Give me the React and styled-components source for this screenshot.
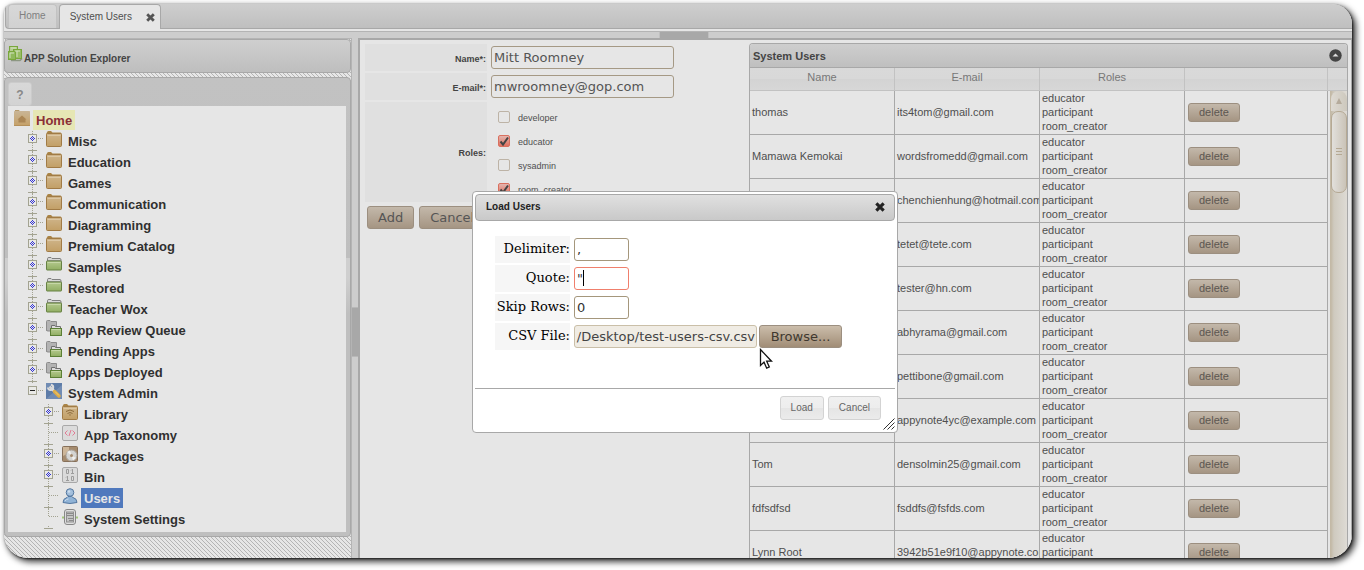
import React from "react";
import styled, { createGlobalStyle, css } from "styled-components";

const line = "#a8a8a8";
const sans = '"Liberation Sans", Arial, sans-serif';
const dejavu = '"DejaVu Sans", Verdana, sans-serif';

const GlobalStyle = createGlobalStyle`
  *, *::before, *::after { box-sizing: border-box; }
  html, body { margin: 0; background: #fff; }
  body { font: 11px/14px ${sans}; color: #4f4f4f; overflow: hidden; }
  button, input { font: inherit; color: inherit; margin: 0; }
  a { color: inherit; text-decoration: none; }
`;

const hatch = css`
  background-color: #e6e6e6;
  background-image: linear-gradient(45deg, #b4b4b4 12.5%, transparent 12.5%, transparent 50%, #b4b4b4 50%, #b4b4b4 62.5%, transparent 62.5%);
  background-size: 4px 4px;
`;

const Shell = styled.div`
  padding: 4px 12px 12px 4px;
  height: 100vh;
`;

const Frame = styled.div`
  display: flex;
  flex-direction: column;
  height: 100%;
  overflow: hidden;
  background: #e6e6e6;
  border-radius: 8px 20px 24px 24px;
  box-shadow: 1px 1px 2px #222, 3px 3px 6px 1px rgba(0, 0, 0, 0.75);
`;

/* ---------- tabs ---------- */
const TabBar = styled.nav`
  display: flex;
  align-items: flex-end;
  gap: 2px;
  flex: none;
  height: 25px;
  margin-left: 1px;
  padding-left: 2px;
  background: linear-gradient(#cecece, #bfbfbf);
  border: solid ${line};
  border-width: 0 0 1px 1px;
  border-radius: 0 0 0 4px;
`;

const Tab = styled.div`
  display: flex;
  align-items: center;
  gap: 14px;
  height: ${(p) => (p.$active ? 25 : 24)}px;
  margin-bottom: ${(p) => (p.$active ? -1 : 0)}px;
  padding: 0 ${(p) => (p.$active ? 5 : 10)}px 1px 10px;
  font-size: 10px;
  color: ${(p) => (p.$active ? "#4f4f4f" : "#808080")};
  background: ${(p) => (p.$active ? "#e6e6e6" : "linear-gradient(#d8d8d8, #d1d1d1)")};
  border: 1px solid ${(p) => (p.$active ? line : "#c2c2c2")};
  border-bottom: 0;
  border-radius: 4px 4px 0 0;
`;

const IconButton = styled.button`
  display: flex;
  padding: 0;
  border: 0;
  background: none;
`;

const TabClose = styled(IconButton)`
  padding-top: 2px;
`;

const TopStrip = styled.div`
  flex: none;
  height: 3px;
  background: #e6e6e6;
  border-bottom: 1px solid #b4b4b4;
`;

const SplitterH = styled.div`
  display: flex;
  justify-content: center;
  flex: none;
  height: 6px;
  padding-left: 12px;
  background: #cdcdcd;
  &::after { content: ""; width: 50px; background: #a8a8a8; border: solid #c0c0c0; border-width: 0 1px; }
`;

/* ---------- panes ---------- */
const Body = styled.div`
  display: flex;
  flex: 1;
  min-height: 0;
`;

const West = styled.aside`
  display: flex;
  flex-direction: column;
  flex: 0 0 348px;
  gap: 4px;
  border: solid #b4b4b4;
  border-width: 1px 1px 0 0;
  ${hatch}
`;

const SplitterV = styled.div`
  display: flex;
  align-items: center;
  flex: 0 0 6px;
  padding-top: 68px;
  background: #cdcdcd;
  &::after { content: ""; width: 6px; height: 50px; background: #a8a8a8; border: solid #b8b8b8; border-width: 1px 0; }
`;

const Center = styled.main`
  display: flex;
  flex: 1;
  gap: 5px;
  min-width: 0;
  padding: 3px 3px 0 5px;
  background: #e6e6e6;
  border: solid ${line};
  border-width: 2px 1px 0 2px;
`;

const ExplorerHeader = styled.h1`
  display: flex;
  align-items: center;
  flex: none;
  height: 34px;
  margin: 0;
  padding: 5px 3px 0;
  font-size: 10px;
  font-weight: bold;
  color: #444;
  background: linear-gradient(#cfcfcf, #bebebe);
  border: 1px solid ${line};
  border-radius: 4px;
  svg { margin-top: -10px; }
`;

const TreePanel = styled.section`
  padding: 4px 4px 4px 3px;
  background: linear-gradient(#c2c2c2 0, #bfbfbf 180px, #cfcfcf 180px, #cfcfcf 200px, #bfbfbf 236px, #bfbfbf);
  border: 1px solid ${line};
  border-radius: 4px;
`;

const HelpButton = styled.button`
  display: block;
  width: 24px;
  height: 24px;
  padding: 1px 0 0;
  font-size: 12px;
  font-weight: bold;
  color: #888;
  background: linear-gradient(#d8d8d8, #d3d3d3);
  border: 1px solid #cbcbcb;
  border-radius: 3px;
`;

const Tree = styled.ul`
  margin: 0;
  padding: 4px 6px 2px;
  list-style: none;
  background: #e6e6e6;
`;

const TreeRow = styled.li`
  display: flex;
  height: 21px;
  padding-left: ${(p) => (p.$level ? p.$level * 16 - 2 : 0)}px;
  svg { flex: none; }
`;

const TreeLink = styled.a`
  height: 20px;
  margin-left: 3px;
  padding: 0 3px;
  font-size: 13px;
  line-height: 21px;
  font-weight: bold;
  color: #303030;
  ${(p) => p.$root && "color: #8b2f36; background: #e6e6b4;"}
  ${(p) => p.$active && "color: #e6e6e6; background: #5079bd;"}
`;

/* ---------- form ---------- */
const FormPane = styled.form`
  flex: 0 0 379px;
  padding-top: 1px;
`;

const FieldGrid = styled.div`
  display: grid;
  grid-template-columns: 122px 1fr;
  gap: 2px 4px;
`;

const FieldLabel = styled.label`
  display: flex;
  align-items: center;
  justify-content: flex-end;
  min-height: 27px;
  padding: 2px 1px 0 0;
  font-size: 9px;
  font-weight: bold;
  color: #444;
  background: #e0e0e0;
`;

const TextInput = styled.input`
  align-self: center;
  width: ${(p) => p.$w}px;
  height: 23px;
  padding: 0 2px;
  font: 13px/18px ${dejavu};
  color: #555;
  background: transparent;
  border: 1px solid #a59985;
  border-radius: 3px;
  outline: 0;
`;

const RoleList = styled.div`
  display: flex;
  flex-direction: column;
  height: 100px;
  padding: 3px 0 0 7px;
`;

const RoleLabel = styled.label`
  display: flex;
  align-items: center;
  gap: 8px;
  flex: none;
  height: 24px;
  padding-top: 2px;
  font-size: 9px;
`;

const CheckWrap = styled.span`
  position: relative;
  display: flex;
  margin-top: -2px;
  svg { position: absolute; left: 0; top: 0; pointer-events: none; }
`;

const Check = styled.input`
  appearance: none;
  width: 12px;
  height: 12px;
  border: 1px solid #bdb3a6;
  border-radius: 2px;
  &:checked { border-color: #d9705f; background: linear-gradient(#e3b5ae, #e0705f); }
`;

const Buttons = styled.div`
  display: flex;
  gap: 5px;
  padding: 4px 2px;
`;

const taupe = css`
  background: linear-gradient(#c3b8aa, #a59583);
  border: 1px solid #9c8f80;
  border-radius: 3px;
`;

const BigButton = styled.button`
  height: 23px;
  padding: 0 10px;
  font: 13px/18px ${dejavu};
  color: #555;
  ${taupe}
`;

/* ---------- grid ---------- */
const GridPanel = styled.section`
  display: flex;
  flex-direction: column;
  flex: 1;
  min-width: 0;
  border: 1px solid ${line};
  border-bottom: 0;
  border-radius: 4px 4px 0 0;
`;

const GridTitle = styled.h2`
  display: flex;
  align-items: center;
  justify-content: space-between;
  flex: none;
  height: 24px;
  margin: 0;
  padding: 0 5px 0 3px;
  font-size: 11px;
  color: #444;
  background: linear-gradient(#cecece, #bfbfbf);
  border-bottom: 1px solid ${line};
  border-radius: 3px 3px 0 0;
`;

const GridBody = styled.div`
  display: flex;
  background: linear-gradient(#d9d9d9 0, #d8d8d8 11px, #d3d3d3 11px, #d7d7d7 22px, #c2c2c2 22px, #c2c2c2 23px, transparent 23px);
`;

const Table = styled.table`
  flex: 1;
  min-width: 0;
  width: 100%;
  table-layout: fixed;
  border-collapse: separate;
  border-spacing: 0;
`;

const Th = styled.th`
  width: 145px;
  height: 23px;
  padding: 0 0 4px;
  font-weight: normal;
  color: #777;
  border-right: 1px solid #c2c2c2;
  border-bottom: 1px solid #c2c2c2;
  &:last-child { width: auto; }
`;

const Td = styled.td`
  height: 44px;
  padding: 0 2px 1px;
  overflow: hidden;
  white-space: nowrap;
  border-right: 1px solid ${line};
  border-bottom: 1px solid ${line};
`;

const Role = styled.div`
  height: 14px;
`;

const DeleteButton = styled.button`
  display: block;
  height: 19px;
  margin-left: 1px;
  padding: 0 10px;
  line-height: 15px;
  color: #5c5650;
  ${taupe}
`;

const Scroll = styled.div`
  display: flex;
  flex-direction: column;
  flex: 0 0 17px;
  margin: 23px 0 0 2px;
  background: linear-gradient(90deg, #c3b9a6, #cfcabf 3px, #dedbd5);
  border-left: 1px solid #c3b9a6;
`;

const ScrollUp = styled(IconButton)`
  align-items: center;
  justify-content: center;
  height: 20px;
  background: linear-gradient(90deg, #dedad3, #cdc8bd);
  border-radius: 8px 8px 0 0;
`;

const Thumb = styled.div`
  display: flex;
  align-items: center;
  justify-content: center;
  height: 82px;
  background: linear-gradient(90deg, #e2e0dc, #cac3b7);
  border: 1px solid #b5a994;
  border-radius: 7px;
`;

/* ---------- dialog ---------- */
const Dialog = styled.section`
  position: absolute;
  left: 472px;
  top: 191px;
  width: 426px;
  padding: 2px;
  color: #222;
  background: #fff;
  border: 1px solid ${line};
  border-radius: 4px;
`;

const DialogTitle = styled.header`
  display: flex;
  align-items: center;
  justify-content: space-between;
  height: 27px;
  padding: 0 9px 1px 10px;
  font-size: 10px;
  font-weight: bold;
  background: linear-gradient(#e0e0e0, #c9c9c9);
  border: 1px solid ${line};
  border-radius: 4px;
`;

const DialogForm = styled.div`
  display: grid;
  grid-template-columns: 75px 1fr;
  gap: 2px 4px;
  height: 167px;
  align-content: start;
  padding: 15px 20px;
`;

const DialogLabel = styled.label`
  height: 27px;
  text-align: right;
  font: 13px/26px "DejaVu Serif", serif;
  color: #000;
  background: #f6f6f6;
`;

const DialogInput = styled(TextInput)`
  color: #333;
  border-color: ${(p) => (p.$focus ? "#f07f6c" : "#a5977c")};
  ${(p) => p.$file && "color: #444; background: #f0ece4; border-color: #cabfa8; text-align: right; padding: 0 1px;"}
`;

const FieldRow = styled.div`
  position: relative;
  display: flex;
  align-items: center;
  gap: 2px;
`;

const Caret = styled.span`
  position: absolute;
  left: 9px;
  top: 5px;
  width: 1px;
  height: 16px;
  background: #000;
`;

const BrowseButton = styled(BigButton)`
  width: 83px;
  padding: 0;
  color: #40382f;
  background: linear-gradient(#cbbdab, #a18d76);
`;

const DialogFooter = styled.footer`
  display: flex;
  justify-content: flex-end;
  gap: 4px;
  height: 42px;
  padding: 7px 14px 0 0;
  border-top: 1px solid ${line};
`;

const SoftButton = styled.button`
  height: 24px;
  padding: 0 10px;
  font-size: 10px;
  color: #666;
  background: linear-gradient(#f0f0f0 0, #ededed 50%, #e5e5e5 50%, #ebebeb);
  border: 1px solid #d3d3d3;
  border-radius: 3px;
`;

const Grip = styled.svg`
  position: absolute;
  right: 2px;
  bottom: 2px;
`;

const Pointer = styled.svg`
  position: absolute;
  left: 759px;
  top: 348px;
`;

/* ---------- drawings ---------- */
const CloseIcon = ({ size = 9, color = "#555" }) => (
  <svg width={size} height={size} viewBox="0 0 9 9" aria-hidden="true">
    <path d="M1.2 1.2 7.8 7.8M7.8 1.2 1.2 7.8" stroke={color} strokeWidth="2.8" />
  </svg>
);

const ExplorerIcon = () => (
  <svg width="16" height="16" viewBox="0 0 16 16" aria-hidden="true">
    <path d="M3 14.5h9l2-2" stroke="#8c9682" strokeWidth="1.5" fill="none" />
    <rect x="1.5" y=".5" width="8" height="9" fill="#b5cc92" stroke="#79a73c" />
    <rect x="5.5" y="3.5" width="8" height="9" fill="#98bd65" stroke="#79a73c" />
    <rect x=".5" y="5.5" width="7" height="8" fill="#8fb95c" stroke="#79a73c" />
    <path d="M2 7h4M2 7v5M7 5h5M9 5v6M3 2h5" stroke="#d3e2bf" />
  </svg>
);

function Expander({ kind, last }) {
  return (
    <svg width="18" height="21" viewBox="0 0 18 21" shapeRendering="crispEdges" aria-hidden="true">
      {kind !== "minus" && (
        <>
          <path d={`M4.5 0V${last ? 8 : 21}`} stroke="#a3a391" strokeDasharray="1 1" />
          {last && <path d="M4.5 17v3" stroke="#a3a391" strokeDasharray="1 1" />}
          <path d="M0 19.5h9" stroke="#a3a391" />
        </>
      )}
      <path d={kind === "none" ? "M5 7.5h10" : "M10 7.5h5"} stroke="#a3a391" strokeDasharray="1 1" />
      {kind !== "none" && <rect x=".5" y="3.5" width="8" height="8" fill="#e9e9e6" stroke="#a3a391" />}
      {kind === "minus" && <path d="M2 7.5h5" stroke="#222" />}
      {kind === "plus" && (
        <g fill="#3434d6">
          <path d="M4 5h1v1H4zM3 6h1v1H3zM5 6h1v1H5zM2 7h1v1H2zM4 7h1v1H4zM6 7h1v1H6zM3 8h1v1H3zM5 8h1v1H5zM4 9h1v1H4z" />
        </g>
      )}
    </svg>
  );
}

const TanFolder = ({ children }) => (
  <>
    <path d="M1 1.500Q1 0 2.500 0H5L6.500 1.500H14.500Q15.500 1.500 15.500 3V4H.5V2z" fill="#a98345" />
    <rect x=".5" y="2.500" width="15" height="13" rx="1" fill="url(#tan)" stroke="#a17b45" />
    <path d="M1.500 4.500h13" stroke="#dcc7a4" />
    {children}
  </>
);

const GreenFolder = () => (
  <>
    <path d="M1.500 5V1.500Q1.500.5 3 .5H5L6 1.500H14Q15 1.500 15 3V5" fill="#d8d8d8" stroke="#808080" />
    <path d="M2 3.500H14.500" stroke="#9a9a9a" />
    <rect x=".5" y="4" width="15" height="9" rx=".5" fill="url(#green)" stroke="#668143" />
    <path d="M1.500 5.500h13" stroke="#c6d7a7" />
  </>
);

const drawings = {
  home: (
    <>
      <path d="M1 0H5L6 1.500H15V4H1z" fill="#b59a6c" />
      <rect y="1" width="16" height="15" rx=".5" fill="url(#house)" />
      <path d="M0 15.500h16" stroke="#b5905a" />
      <path d="M8 5.500 12.500 9.500H11.500V12.500H4.500V9.500H3.500z" fill="#ab8655" />
    </>
  ),
  tan: <TanFolder />,
  green: <GreenFolder />,
  stack: (
    <>
      <path d="M.5 10.500V1.500Q.5.500 1.500.500H4L5 1.500H10.500V11H2Q.5 11 .5 10z" fill="#b3b3b3" stroke="#8c8c8c" />
      <path d="M5.500 8V5.500H9L9.500 6.500H14.500V8" fill="#ddd" stroke="#707070" />
      <rect x="4.500" y="8.500" width="11" height="7" fill="url(#green)" stroke="#5b7f35" />
      <path d="M5.500 9.500h9" stroke="#c6d7a7" />
    </>
  ),
  admin: (
    <>
      <rect width="16" height="16" fill="#5d7ca8" />
      <path d="M0 16 16 2V16zM0 0h7L0 7z" fill="#7e98bc" opacity=".6" />
      <path d="M3.500 3.500 8.500 8.500" stroke="#d8d8d8" strokeWidth="2.500" />
      <path d="M2 4.500a2.600 2.600 0 1 0 3-2.700" fill="none" stroke="#dcdcdc" strokeWidth="2" />
      <path d="M8.500 8.500 13 13" stroke="#dfac46" strokeWidth="3.500" strokeLinecap="round" />
      <path d="M9 8.500 13 12.500" stroke="#eccb7c" />
    </>
  ),
  library: (
    <TanFolder>
      <path d="M4 7.500Q8 4.500 12 7.500M5.500 9.500Q8 7.500 10.500 9.500" fill="none" stroke="#8d6c3c" />
      <path d="M7 10.500h2L8 12z" fill="#8d6c3c" />
    </TanFolder>
  ),
  taxonomy: (
    <>
      <rect x=".5" y=".5" width="15" height="15" rx="1.500" fill="#dbdbdb" stroke="#a8a8a8" />
      <path d="M5.500 5.500 3 8 5.500 10.500M10.500 5.500 13 8 10.500 10.500M9 5 7 11" fill="none" stroke="#e27c95" />
    </>
  ),
  packages: (
    <>
      <rect x=".5" y=".5" width="15" height="15" rx="1" fill="#a58b6e" stroke="#86705a" />
      <path d="M1 1h6v6L1 10z" fill="#cdb699" />
      <circle cx="9.500" cy="9.500" r="5.500" fill="#d4d4d2" stroke="#aaa49c" />
      <path d="M9.500 9.500 5 6 8 4.500zM9.500 9.500 14 12 11 14.500z" fill="#f0f0ee" />
      <circle cx="9.500" cy="9.500" r="1.500" fill="#a58b6e" />
    </>
  ),
  bin: (
    <>
      <rect x=".5" y=".5" width="15" height="15" rx="1.500" fill="#dadada" stroke="#a8a8a8" />
      <g fill="none" stroke="#9c9c9c">
        <path d="M4.500 2.500h2v4h-2zM10.500 2v5M9 3.500l1-1M9 6.500h3" />
        <path d="M5.500 9v5M4 10.500l1-1M4 13.500h3M9.500 9.500h2v4h-2z" />
      </g>
    </>
  ),
  users: (
    <>
      <path d="M1 14.500Q1 10.500 5 9.500L6 8.500H9.500L11 9.500Q15 10.500 15 14.500Q8 16.500 1 14.500z" fill="#90b3d6" stroke="#54779f" />
      <circle cx="8" cy="4.500" r="3.800" fill="#a3bfdc" stroke="#54779f" />
      <path d="M3 13Q4 11 6.500 11" stroke="#cbdced" fill="none" />
      <circle cx="7" cy="3.500" r="1.300" fill="#cbdced" />
    </>
  ),
  settings: (
    <>
      <path d="M0 8.500h16" stroke="#a3c67c" strokeWidth="2" />
      <rect x="2.500" y=".5" width="11" height="15" rx="2.500" fill="#dedede" stroke="#888" />
      <rect x="4.500" y="3" width="7" height="10" fill="#c4c4c4" stroke="#8f8f8f" />
      <path d="M5 4.500h6M5 6.500h6M6 9.500h5M7 11.500h4" stroke="#8a8a8a" />
    </>
  ),
};

const NodeIcon = ({ name }) => (
  <svg width="16" height="16" viewBox="0 0 16 16" aria-hidden="true">
    <defs>
      <linearGradient id="tan" x2="0" y2="1"><stop stopColor="#cfb58b" /><stop offset="1" stopColor="#c29f66" /></linearGradient>
      <linearGradient id="house" x2="0" y2="1"><stop stopColor="#c9b596" /><stop offset="1" stopColor="#c5a067" /></linearGradient>
      <linearGradient id="green" x2="0" y2="1"><stop stopColor="#b5ca8f" /><stop offset="1" stopColor="#91ae63" /></linearGradient>
    </defs>
    {drawings[name]}
  </svg>
);

/* ---------- data ---------- */
const nodes = [
  ["Home", "home", 0],
  ["Misc", "tan", 1, "plus"],
  ["Education", "tan", 1, "plus"],
  ["Games", "tan", 1, "plus"],
  ["Communication", "tan", 1, "plus"],
  ["Diagramming", "tan", 1, "plus"],
  ["Premium Catalog", "tan", 1, "plus"],
  ["Samples", "green", 1, "plus"],
  ["Restored", "green", 1, "plus"],
  ["Teacher Wox", "green", 1, "plus"],
  ["App Review Queue", "stack", 1, "plus"],
  ["Pending Apps", "stack", 1, "plus"],
  ["Apps Deployed", "stack", 1, "plus"],
  ["System Admin", "admin", 1, "minus"],
  ["Library", "library", 2, "plus"],
  ["App Taxonomy", "taxonomy", 2, "none"],
  ["Packages", "packages", 2, "plus"],
  ["Bin", "bin", 2, "plus"],
  ["Users", "users", 2, "none"],
  ["System Settings", "settings", 2, "none"],
];

const roles = [["developer", false], ["educator", true], ["sysadmin", false], ["room_creator", true]];

const users = [
  ["thomas", "its4tom@gmail.com"],
  ["Mamawa Kemokai", "wordsfromedd@gmail.com"],
  ["", "chenchienhung@hotmail.com"],
  ["", "tetet@tete.com"],
  ["", "tester@hn.com"],
  ["", "abhyrama@gmail.com"],
  ["", "pettibone@gmail.com"],
  ["", "appynote4yc@example.com"],
  ["Tom", "densolmin25@gmail.com"],
  ["fdfsdfsd", "fsddfs@fsfds.com"],
  ["Lynn Root", "3942b51e9f10@appynote.com"],
];

function Explorer() {
  return (
    <West>
      <ExplorerHeader><ExplorerIcon />APP Solution Explorer</ExplorerHeader>
      <TreePanel>
        <HelpButton type="button">?</HelpButton>
        <Tree>
          {nodes.map(([label, icon, level, kind]) => (
            <TreeRow key={label} $level={level}>
              {kind && <Expander kind={kind} last={label === "System Settings"} />}
              <NodeIcon name={icon} />
              <TreeLink href="#" $root={level === 0} $active={label === "Users"}>{label}</TreeLink>
            </TreeRow>
          ))}
        </Tree>
      </TreePanel>
    </West>
  );
}

function UserForm() {
  return (
    <FormPane>
      <FieldGrid>
        <FieldLabel htmlFor="name">Name*:</FieldLabel>
        <TextInput id="name" $w={183} defaultValue="Mitt Roomney" />
        <FieldLabel htmlFor="email">E-mail*:</FieldLabel>
        <TextInput id="email" $w={183} defaultValue="mwroomney@gop.com" />
        <FieldLabel as="div" id="roles">Roles:</FieldLabel>
        <RoleList role="group" aria-labelledby="roles">
          {roles.map(([role, on]) => (
            <RoleLabel key={role}>
              <CheckWrap>
                <Check type="checkbox" defaultChecked={on} />
                {on && (
                  <svg width="12" height="12" viewBox="0 0 12 12" aria-hidden="true">
                    <path d="M2.500 6.500 5 9.500 10 2.500" fill="none" stroke="#444" strokeWidth="2" />
                  </svg>
                )}
              </CheckWrap>
              {role}
            </RoleLabel>
          ))}
        </RoleList>
      </FieldGrid>
      <Buttons>
        <BigButton type="button">Add</BigButton>
        <BigButton type="button">Cancel</BigButton>
      </Buttons>
    </FormPane>
  );
}

function UserGrid() {
  return (
    <GridPanel>
      <GridTitle>
        System Users
        <IconButton type="button" aria-label="Collapse">
          <svg width="13" height="13" viewBox="0 0 13 13" aria-hidden="true">
            <circle cx="6.500" cy="6.500" r="6.200" fill="#444" />
            <path d="M3.500 7.500 6.500 4.500 9.500 7.500z" fill="#ddd" />
          </svg>
        </IconButton>
      </GridTitle>
      <GridBody>
        <Table>
          <thead>
            <tr><Th>Name</Th><Th>E-mail</Th><Th>Roles</Th><Th aria-label="Actions" /></tr>
          </thead>
          <tbody>
            {users.map(([name, email]) => (
              <tr key={email}>
                <Td>{name}</Td>
                <Td>{email}</Td>
                <Td><Role>educator</Role><Role>participant</Role><Role>room_creator</Role></Td>
                <Td><DeleteButton type="button">delete</DeleteButton></Td>
              </tr>
            ))}
          </tbody>
        </Table>
        <Scroll>
          <ScrollUp type="button" aria-label="Scroll up">
            <svg width="6" height="6" viewBox="0 0 6 6" aria-hidden="true"><path d="M3 0 6 6H0z" fill="#b5ab9c" /></svg>
          </ScrollUp>
          <Thumb>
            <svg width="6" height="8" viewBox="0 0 6 8" aria-hidden="true"><path d="M0 .5h6M0 3.500h6M0 6.500h6" stroke="#b5a994" /></svg>
          </Thumb>
        </Scroll>
      </GridBody>
    </GridPanel>
  );
}

function LoadUsersDialog() {
  return (
    <Dialog role="dialog" aria-labelledby="dialog-title">
      <DialogTitle>
        <span id="dialog-title">Load Users</span>
        <IconButton type="button" aria-label="Close"><CloseIcon size={10} color="#222" /></IconButton>
      </DialogTitle>
      <DialogForm>
        <DialogLabel htmlFor="delimiter">Delimiter:</DialogLabel>
        <FieldRow><DialogInput id="delimiter" $w={55} defaultValue="," /></FieldRow>
        <DialogLabel htmlFor="quote">Quote:</DialogLabel>
        <FieldRow><DialogInput id="quote" $w={55} $focus defaultValue={'"'} /><Caret /></FieldRow>
        <DialogLabel htmlFor="skip">Skip Rows:</DialogLabel>
        <FieldRow><DialogInput id="skip" $w={55} defaultValue="0" /></FieldRow>
        <DialogLabel htmlFor="csv">CSV File:</DialogLabel>
        <FieldRow>
          <DialogInput id="csv" $w={183} $file readOnly value="/Desktop/test-users-csv.csv" />
          <BrowseButton type="button">Browse...</BrowseButton>
        </FieldRow>
      </DialogForm>
      <DialogFooter>
        <SoftButton type="button">Load</SoftButton>
        <SoftButton type="button">Cancel</SoftButton>
      </DialogFooter>
      <Grip width="12" height="12" viewBox="0 0 12 12" aria-hidden="true">
        <path d="M.5 11.500 11.500.5M4.500 11.500 11.500 4.500M8.500 11.500 11.500 8.500" stroke="#333" />
      </Grip>
    </Dialog>
  );
}

export default function App() {
  return (
    <>
      <GlobalStyle />
      <Shell>
        <Frame>
          <TabBar>
            <Tab><a href="#">Home</a></Tab>
            <Tab $active>
              <a href="#">System Users</a>
              <TabClose type="button" aria-label="Close tab"><CloseIcon /></TabClose>
            </Tab>
          </TabBar>
          <TopStrip />
          <SplitterH />
          <Body>
            <Explorer />
            <SplitterV />
            <Center>
              <UserForm />
              <UserGrid />
            </Center>
          </Body>
        </Frame>
      </Shell>
      <LoadUsersDialog />
      <Pointer width="14" height="22" viewBox="0 0 14 22" aria-hidden="true">
        <path d="M1.500 1.500V17.500L5 14.200 7.700 20.200 10.300 19 7.700 13.200H12.500z" fill="#fff" stroke="#111" strokeWidth="1.300" />
      </Pointer>
    </>
  );
}
